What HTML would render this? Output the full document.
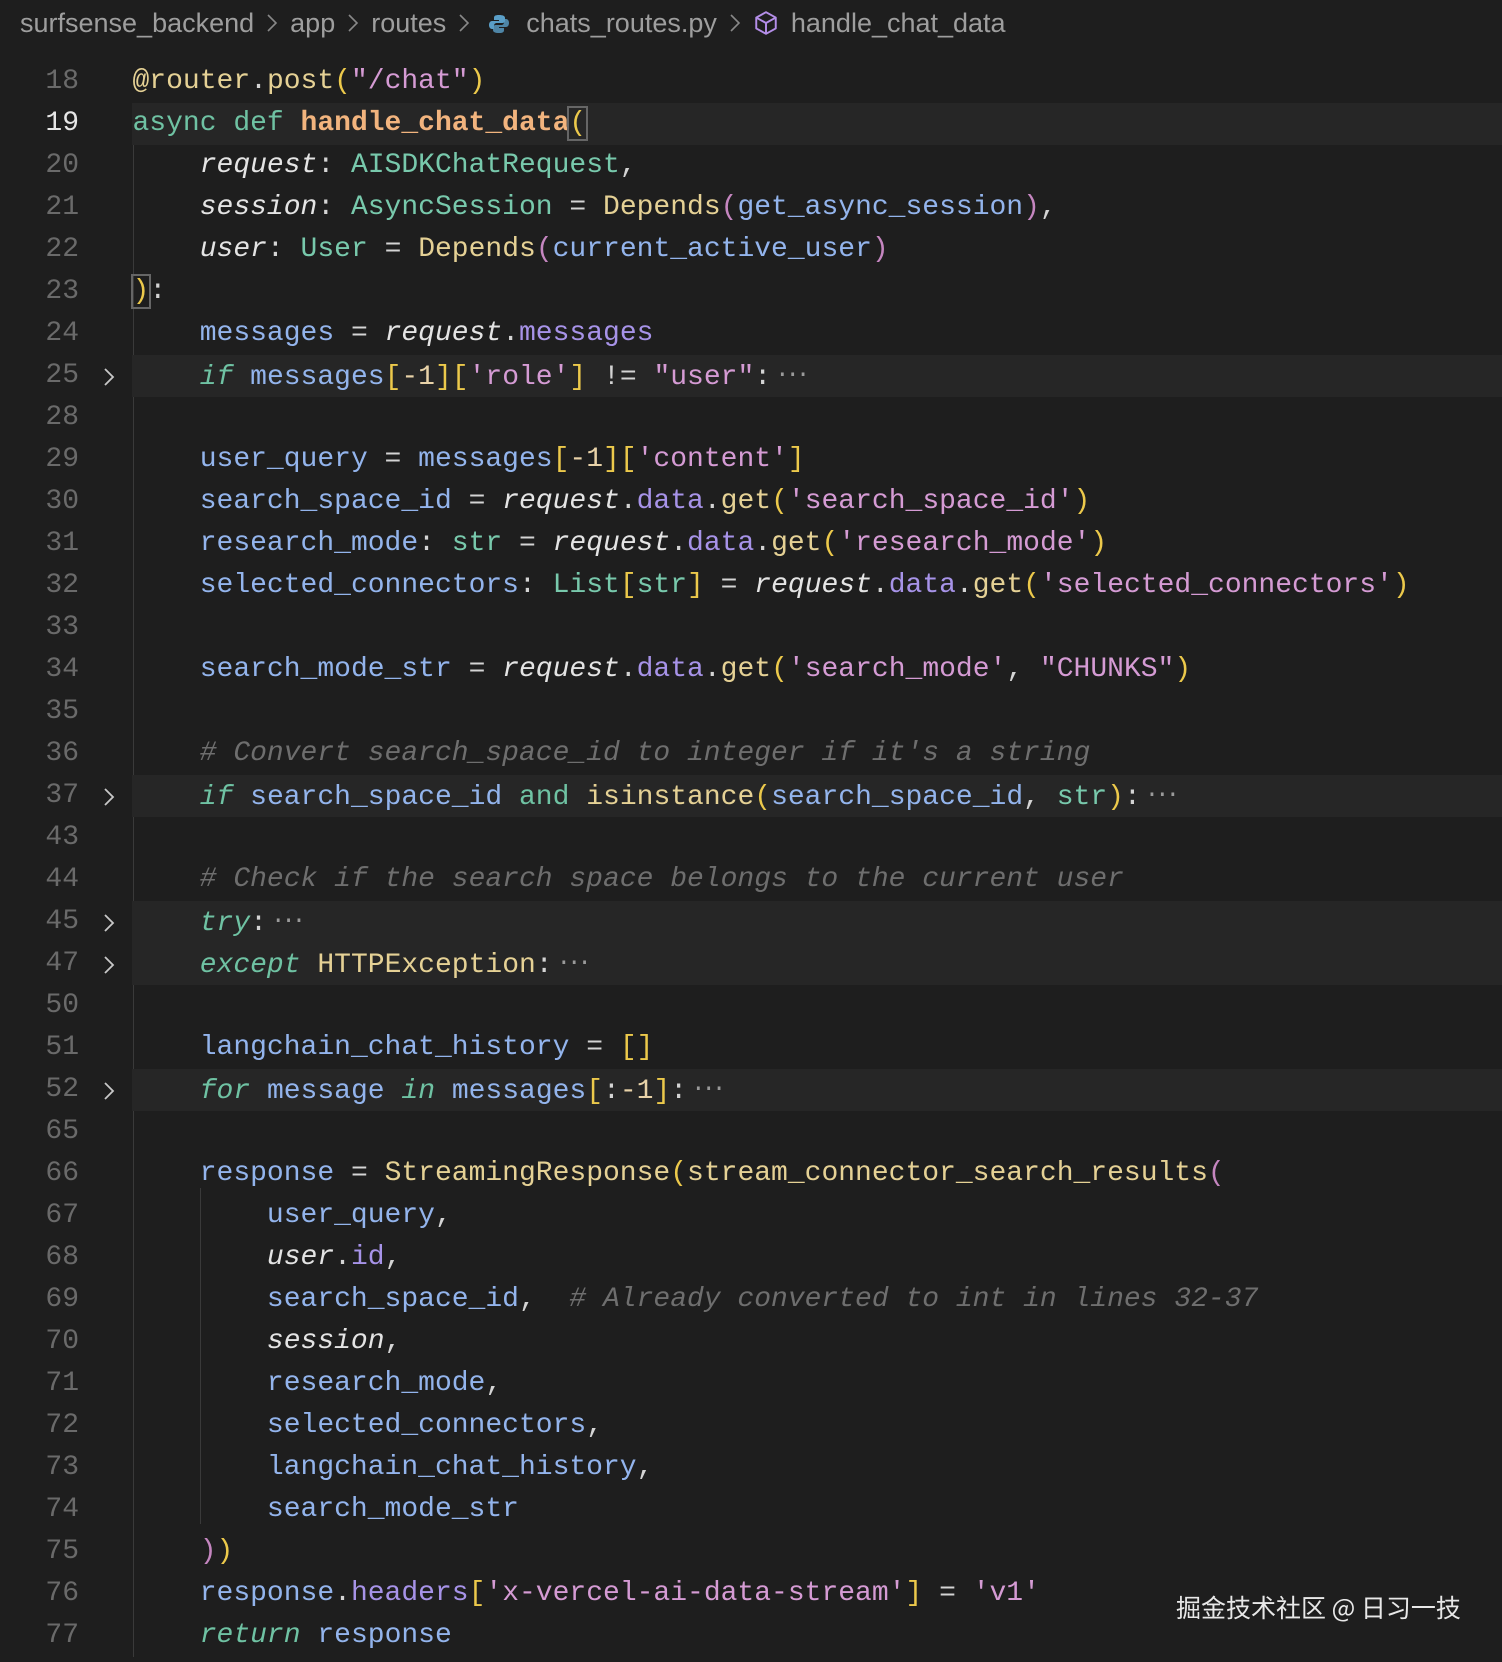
<!DOCTYPE html>
<html><head><meta charset="utf-8"><style>
html,body{margin:0;padding:0;background:#1e1e1e;width:1502px;height:1662px;overflow:hidden}
.bc{position:absolute;left:20px;top:4px;height:38px;line-height:38px;font-family:"Liberation Sans",sans-serif;font-size:27px;color:#9e9e9e;white-space:nowrap}
.bc .sep{display:inline-block;margin:0 12px;vertical-align:-1px}
.row{position:absolute;left:0;width:1502px;height:42px;line-height:42px;font-family:"Liberation Mono",monospace;font-size:28px;white-space:pre}
.hl{position:absolute;left:132px;right:0;height:42px;background:#262626}
.ln{position:absolute;left:0;width:79px;text-align:right;color:#6a6a6a}
.cur{color:#e6e6e6}
.code{position:absolute;left:132.5px;color:#d4d4d4}
.chev{position:absolute;left:102px;top:12px}
.k{color:#6fc2a3}.ki{color:#6fc2a3;font-style:italic}
.fn{color:#f2b47e;font-weight:bold}
.p{color:#e4e4e4;font-style:italic}
.t{color:#78c9ac}
.y{color:#e5d195}
.pk{color:#c586c0}
.b{color:#ecc94b}
.v{color:#93b4ec}
.pr{color:#a793e8}
.s{color:#d59bd4}
.n{color:#e8d2a8}
.c{color:#6e6e6e;font-style:italic}
.el{color:#9a9a9a;font-size:24px;vertical-align:3px;letter-spacing:-4px;margin-left:4px}
.g{position:absolute;width:1px;background:#3a3a3a}
.wm{position:absolute;left:1176px;top:1589px;font-family:"Noto Sans CJK SC",sans-serif;font-size:25px;color:#e8e8e8}
</style></head><body>
<div class="bc">surfsense_backend<svg class="sep" width="12" height="20" viewBox="0 0 12 20"><path d="M2 2L10 10L2 18" fill="none" stroke="#888" stroke-width="1.6"/></svg>app<svg class="sep" width="12" height="20" viewBox="0 0 12 20"><path d="M2 2L10 10L2 18" fill="none" stroke="#888" stroke-width="1.6"/></svg>routes<svg class="sep" width="12" height="20" viewBox="0 0 12 20"><path d="M2 2L10 10L2 18" fill="none" stroke="#888" stroke-width="1.6"/></svg><svg width="22" height="22" viewBox="0 0 22 22" style="vertical-align:-3px;margin:0 16px 0 6px"><path d="M11 2c-4 0-5 1-5 3v2h5v1H4c-2 0-3 2-3 4s1 4 3 4h2v-3c0-2 1-3 3-3h5c2 0 3-1 3-3V5c0-2-2-3-6-3z" fill="#5a9fc8"/><path d="M11 20c4 0 5-1 5-3v-2h-5v-1h7c2 0 3-2 3-4s-1-4-3-4h-2v3c0 2-1 3-3 3H8c-2 0-3 1-3 3v2c0 2 2 3 6 3z" fill="#5a9fc8" opacity=".8"/></svg>chats_routes.py<svg class="sep" width="12" height="20" viewBox="0 0 12 20"><path d="M2 2L10 10L2 18" fill="none" stroke="#888" stroke-width="1.6"/></svg><svg width="26" height="26" viewBox="0 0 24 24" style="vertical-align:-4px;margin-right:12px"><path d="M12 2L21 7V17L12 22L3 17V7Z M3 7L12 12L21 7 M12 12V22" fill="none" stroke="#b48ee8" stroke-width="1.8" stroke-linejoin="round"/></svg>handle_chat_data</div>

<div class="g" style="left:133px;top:145px;height:1512px"></div>
<div class="g" style="left:200px;top:1188px;height:336px"></div>

<div class="row" style="top:61px"><span class="ln">18</span><span class="code"><span class="y">@router</span>.<span class="y">post</span><span class="b">(</span><span class="s">"/chat"</span><span class="b">)</span></span></div>
<div class="row" style="top:103px"><div class="hl"></div><span class="ln cur">19</span><span class="code"><span class="k">async def </span><span class="fn">handle_chat_data</span><span class="b" style="outline:2px solid #666">(</span></span></div>
<div class="row" style="top:145px"><span class="ln">20</span><span class="code">    <span class="p">request</span>: <span class="t">AISDKChatRequest</span>,</span></div>
<div class="row" style="top:187px"><span class="ln">21</span><span class="code">    <span class="p">session</span>: <span class="t">AsyncSession</span> = <span class="y">Depends</span><span class="pk">(</span><span class="v">get_async_session</span><span class="pk">)</span>,</span></div>
<div class="row" style="top:229px"><span class="ln">22</span><span class="code">    <span class="p">user</span>: <span class="t">User</span> = <span class="y">Depends</span><span class="pk">(</span><span class="v">current_active_user</span><span class="pk">)</span></span></div>
<div class="row" style="top:271px"><span class="ln">23</span><span class="code"><span class="b" style="outline:2px solid #666">)</span>:</span></div>
<div class="row" style="top:313px"><span class="ln">24</span><span class="code">    <span class="v">messages</span> = <span class="p">request</span>.<span class="pr">messages</span></span></div>
<div class="row" style="top:355px"><div class="hl"></div><span class="ln">25</span><svg class="chev" width="14" height="20" viewBox="0 0 14 20"><path d="M3 2L11 10L3 18" fill="none" stroke="#c8c8c8" stroke-width="1.8"/></svg><span class="code">    <span class="ki">if</span> <span class="v">messages</span><span class="b">[</span><span class="n">-1</span><span class="b">][</span><span class="s">'role'</span><span class="b">]</span> != <span class="s">"user"</span>:<span class="el">···</span></span></div>
<div class="row" style="top:397px"><span class="ln">28</span></div>
<div class="row" style="top:439px"><span class="ln">29</span><span class="code">    <span class="v">user_query</span> = <span class="v">messages</span><span class="b">[</span><span class="n">-1</span><span class="b">][</span><span class="s">'content'</span><span class="b">]</span></span></div>
<div class="row" style="top:481px"><span class="ln">30</span><span class="code">    <span class="v">search_space_id</span> = <span class="p">request</span>.<span class="pr">data</span>.<span class="y">get</span><span class="b">(</span><span class="s">'search_space_id'</span><span class="b">)</span></span></div>
<div class="row" style="top:523px"><span class="ln">31</span><span class="code">    <span class="v">research_mode</span>: <span class="t">str</span> = <span class="p">request</span>.<span class="pr">data</span>.<span class="y">get</span><span class="b">(</span><span class="s">'research_mode'</span><span class="b">)</span></span></div>
<div class="row" style="top:565px"><span class="ln">32</span><span class="code">    <span class="v">selected_connectors</span>: <span class="t">List</span><span class="b">[</span><span class="t">str</span><span class="b">]</span> = <span class="p">request</span>.<span class="pr">data</span>.<span class="y">get</span><span class="b">(</span><span class="s">'selected_connectors'</span><span class="b">)</span></span></div>
<div class="row" style="top:607px"><span class="ln">33</span></div>
<div class="row" style="top:649px"><span class="ln">34</span><span class="code">    <span class="v">search_mode_str</span> = <span class="p">request</span>.<span class="pr">data</span>.<span class="y">get</span><span class="b">(</span><span class="s">'search_mode'</span>, <span class="s">"CHUNKS"</span><span class="b">)</span></span></div>
<div class="row" style="top:691px"><span class="ln">35</span></div>
<div class="row" style="top:733px"><span class="ln">36</span><span class="code">    <span class="c"># Convert search_space_id to integer if it's a string</span></span></div>
<div class="row" style="top:775px"><div class="hl"></div><span class="ln">37</span><svg class="chev" width="14" height="20" viewBox="0 0 14 20"><path d="M3 2L11 10L3 18" fill="none" stroke="#c8c8c8" stroke-width="1.8"/></svg><span class="code">    <span class="ki">if</span> <span class="v">search_space_id</span> <span class="k">and</span> <span class="y">isinstance</span><span class="b">(</span><span class="v">search_space_id</span>, <span class="t">str</span><span class="b">)</span>:<span class="el">···</span></span></div>
<div class="row" style="top:817px"><span class="ln">43</span></div>
<div class="row" style="top:859px"><span class="ln">44</span><span class="code">    <span class="c"># Check if the search space belongs to the current user</span></span></div>
<div class="row" style="top:901px"><div class="hl"></div><span class="ln">45</span><svg class="chev" width="14" height="20" viewBox="0 0 14 20"><path d="M3 2L11 10L3 18" fill="none" stroke="#c8c8c8" stroke-width="1.8"/></svg><span class="code">    <span class="ki">try</span>:<span class="el">···</span></span></div>
<div class="row" style="top:943px"><div class="hl"></div><span class="ln">47</span><svg class="chev" width="14" height="20" viewBox="0 0 14 20"><path d="M3 2L11 10L3 18" fill="none" stroke="#c8c8c8" stroke-width="1.8"/></svg><span class="code">    <span class="ki">except</span> <span class="y">HTTPException</span>:<span class="el">···</span></span></div>
<div class="row" style="top:985px"><span class="ln">50</span></div>
<div class="row" style="top:1027px"><span class="ln">51</span><span class="code">    <span class="v">langchain_chat_history</span> = <span class="b">[]</span></span></div>
<div class="row" style="top:1069px"><div class="hl"></div><span class="ln">52</span><svg class="chev" width="14" height="20" viewBox="0 0 14 20"><path d="M3 2L11 10L3 18" fill="none" stroke="#c8c8c8" stroke-width="1.8"/></svg><span class="code">    <span class="ki">for</span> <span class="v">message</span> <span class="ki">in</span> <span class="v">messages</span><span class="b">[</span>:<span class="n">-1</span><span class="b">]</span>:<span class="el">···</span></span></div>
<div class="row" style="top:1111px"><span class="ln">65</span></div>
<div class="row" style="top:1153px"><span class="ln">66</span><span class="code">    <span class="v">response</span> = <span class="y">StreamingResponse</span><span class="b">(</span><span class="y">stream_connector_search_results</span><span class="pk">(</span></span></div>
<div class="row" style="top:1195px"><span class="ln">67</span><span class="code">        <span class="v">user_query</span>,</span></div>
<div class="row" style="top:1237px"><span class="ln">68</span><span class="code">        <span class="p">user</span>.<span class="pr">id</span>,</span></div>
<div class="row" style="top:1279px"><span class="ln">69</span><span class="code">        <span class="v">search_space_id</span>,  <span class="c"># Already converted to int in lines 32-37</span></span></div>
<div class="row" style="top:1321px"><span class="ln">70</span><span class="code">        <span class="p">session</span>,</span></div>
<div class="row" style="top:1363px"><span class="ln">71</span><span class="code">        <span class="v">research_mode</span>,</span></div>
<div class="row" style="top:1405px"><span class="ln">72</span><span class="code">        <span class="v">selected_connectors</span>,</span></div>
<div class="row" style="top:1447px"><span class="ln">73</span><span class="code">        <span class="v">langchain_chat_history</span>,</span></div>
<div class="row" style="top:1489px"><span class="ln">74</span><span class="code">        <span class="v">search_mode_str</span></span></div>
<div class="row" style="top:1531px"><span class="ln">75</span><span class="code">    <span class="pk">)</span><span class="b">)</span></span></div>
<div class="row" style="top:1573px"><span class="ln">76</span><span class="code">    <span class="v">response</span>.<span class="pr">headers</span><span class="b">[</span><span class="s">'x-vercel-ai-data-stream'</span><span class="b">]</span> = <span class="s">'v1'</span></span></div>
<div class="row" style="top:1615px"><span class="ln">77</span><span class="code">    <span class="ki">return</span> <span class="v">response</span></span></div>
<div class="wm">掘金技术社区 @ 日习一技</div>
</body></html>
